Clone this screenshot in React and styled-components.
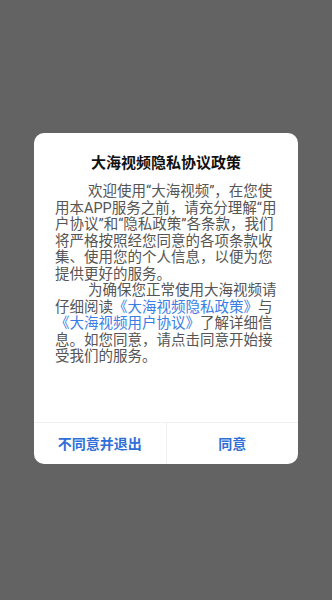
import React from 'react'
import styled, { createGlobalStyle } from 'styled-components'

const GlobalStyle = createGlobalStyle`
  html, body {
    margin: 0;
    padding: 0;
  }
  body {
    font-family: Roboto, "Noto Sans CJK SC", sans-serif;
    background: #636363;
  }
`

const Overlay = styled.div`
  min-height: 100vh;
  display: flex;
  align-items: center;
  justify-content: center;
  padding-bottom: 3px;
  box-sizing: border-box;
`

const Dialog = styled.div`
  width: 264px;
  background: #fff;
  border-radius: 10px;
  overflow: hidden;
  display: flex;
  flex-direction: column;
`

const Title = styled.h1`
  margin: 0;
  padding: 20px 0 0;
  font-size: 15px;
  line-height: 20px;
  font-weight: 700;
  color: #111;
  text-align: center;
`

const Body = styled.div`
  padding: 11px 19px 56px 21px;
`

const Para = styled.p`
  margin: 0;
  font-size: 14.5px;
  line-height: 16.5px;
  color: #555;
  text-indent: 33px;
  word-break: break-all;
`

const Link = styled.span`
  color: #3b7de4;
`

const Footer = styled.div`
  display: flex;
  border-top: 1px solid #f0f0f0;
`

const Button = styled.button`
  flex: 1;
  height: 41px;
  border: none;
  background: none;
  padding: 0;
  font-family: Roboto, "Noto Sans CJK SC", sans-serif;
  font-size: 14px;
  font-weight: 700;
  color: #2f6fd8;
  cursor: pointer;
  & + & {
    border-left: 1px solid #f0f0f0;
  }
`

const App = () => {
  return (
    <>
      <GlobalStyle />
      <Overlay>
        <Dialog>
          <Title>大海视频隐私协议政策</Title>
          <Body>
            <Para>
              欢迎使用“大海视频”，在您使用本APP服务之前，请充分理解“用户协议”和“隐私政策”各条款，我们将严格按照经您同意的各项条款收集、使用您的个人信息，以便为您提供更好的服务。
            </Para>
            <Para>
              为确保您正常使用大海视频请仔细阅读<Link>《大海视频隐私政策》</Link>与<Link>《大海视频用户协议》</Link>了解详细信息。如您同意，请点击同意开始接受我们的服务。
            </Para>
          </Body>
          <Footer>
            <Button>不同意并退出</Button>
            <Button>同意</Button>
          </Footer>
        </Dialog>
      </Overlay>
    </>
  )
}

export default App
